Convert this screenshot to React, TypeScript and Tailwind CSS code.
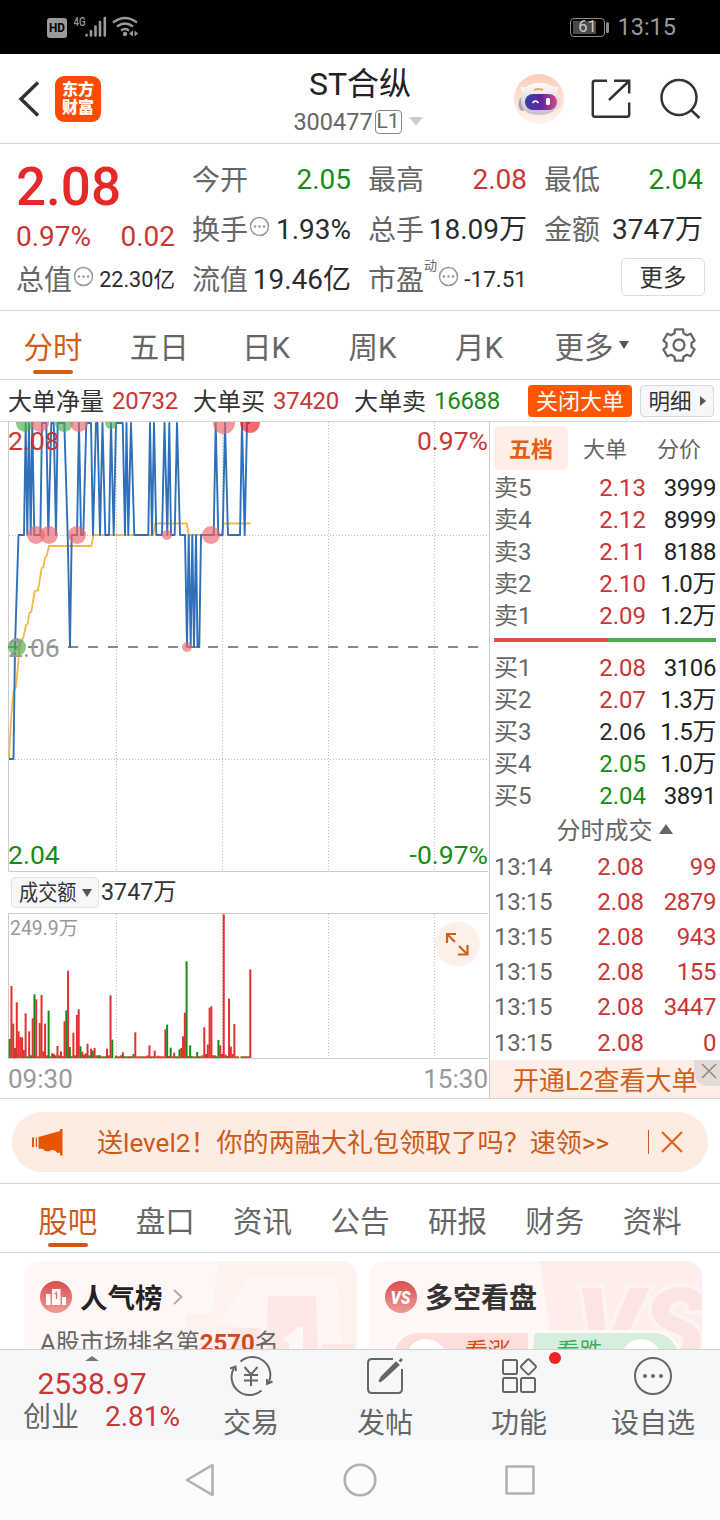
import React from "react";

const RED = "text-[#c93636]";
const GREEN = "text-[#168c16]";
const DARK = "text-[#2b2b2b]";

type Level = { label: string; price: string; volume: string; color: string };

const asks: Level[] = [
  { label: "卖5", price: "2.13", volume: "3999", color: RED },
  { label: "卖4", price: "2.12", volume: "8999", color: RED },
  { label: "卖3", price: "2.11", volume: "8188", color: RED },
  { label: "卖2", price: "2.10", volume: "1.0万", color: RED },
  { label: "卖1", price: "2.09", volume: "1.2万", color: RED },
];

const bids: Level[] = [
  { label: "买1", price: "2.08", volume: "3106", color: RED },
  { label: "买2", price: "2.07", volume: "1.3万", color: RED },
  { label: "买3", price: "2.06", volume: "1.5万", color: DARK },
  { label: "买4", price: "2.05", volume: "1.0万", color: GREEN },
  { label: "买5", price: "2.04", volume: "3891", color: GREEN },
];

const trades = [
  ["13:14", "2.08", "99"],
  ["13:15", "2.08", "2879"],
  ["13:15", "2.08", "943"],
  ["13:15", "2.08", "155"],
  ["13:15", "2.08", "3447"],
  ["13:15", "2.08", "0"],
];

// y of each price level inside the chart: T 2.08, M 2.07, L 2.06, B 2.05
const LEVEL_Y: Record<string, number> = { T: 1, M: 113, L: 225, B: 337 };

const priceLine =
  "9B 13.5B 15L 18.5M 24M 25.7T 27.3M 29T 30.7M 32.3T 34.3M 40.3M 42T 46.3T 48.3M 51.3T 53.7T 56M 57.7T 64.3T 67.7M 70L 71.7M 77M 79T 81M 83.3M 86.3T 91T 93M 96T 97.5T 100M 102.5T 105.3M 109M 111T 113.7M 116T 122.7T 125M 126.5T 128.3M 131T 134.3M 148.3M 150T 152M 154T 156.3M 162M 164.5T 167.3M 169.3T 171M 174.7M 177T 180M 185M 187L 188.7M 190.7L 192.3M 194L 196M 197.5L 199.3L 201M 213.7M 215.7T 218.3M 222.7M 225T 228M 240M 242T 244.7M 247T 250T";

const pricePoints = priceLine
  .split(" ")
  .map((p) => `${p.slice(0, -1)},${LEVEL_Y[p.slice(-1)]}`)
  .join(" ");

const averagePoints =
  "9,336 11,298 13.3,271 16,265 17.3,251 20,221 23.3,216 26,203 27.7,202 29.3,191 31.3,190 34.7,169 38,168.5 41.7,146 43.3,145.5 45.3,135 46.7,134 49,124 91.3,124 93.3,113 153.3,113 155,101.5 186.7,101.5 188.7,113 221.3,113 223.7,101.5 250.7,101.5";

const bubbles: [number, number, number, string][] = [
  [25, 1, 9, "#4caf50"],
  [40, 1, 9, "#ee6468"],
  [64, 1, 9, "#4caf50"],
  [79, 1, 9, "#ee6468"],
  [111, 1, 6, "#4caf50"],
  [36, 113, 9, "#ee6468"],
  [49, 113, 9, "#ee6468"],
  [77, 113, 9, "#ee6468"],
  [167, 113, 5, "#ee6468"],
  [211, 113, 9, "#ee6468"],
  [224, 1, 11, "#ee6468"],
  [250, 1, 10, "#f01820"],
  [187, 225, 5, "#ee6468"],
  [17, 225, 9, "#3fae3f"],
];

// one bar per minute from 09:30, g = down, r = up, number is height in thirds of a pixel
const volumes =
  "g57 r216 r103 r30 r167 r80 r63 r62 r24 r134 g5 r80 g8 r119 g191 r176 r5 r105 r189 r20 r103 r8 g142 g5 r14 r12 g8 r36 r8 r20 r6 r110 g143 r262 g33 g5 r76 r8 r129 r146 g35 r19 r10 r14 r43 g8 r28 g22 r30 r8 g8 g8 r5 g5 g5 r28 r8 r188 g55 g0 r7 g5 r5 r8 r17 g5 g5 r5 g5 r5 g12 r77 r5 r5 r5 g5 r5 r5 r8 r38 g5 r5 r22 r5 r7 r5 r5 r5 r86 g100 r6 g31 r5 r16 g5 r5 g26 r30 r65 r136 g290 r6 g38 g5 r5 r5 g18 g5 r5 r8 r92 r12 r40 r151 r155 r8 r8 g5 g54 r38 r12 r431 r10 g6 r178 r34 r12 r102 r5 r5 g0 r5 g5 r5 g5 r5 r266".split(
    " "
  );

const gearPath = (() => {
  const pts: string[] = [];
  for (let i = 0; i < 6; i++) {
    const base = -90 + i * 60;
    [
      [-21, 12.6],
      [-14, 16.2],
      [14, 16.2],
      [21, 12.6],
    ].forEach(([a, r]) => {
      const t = ((base + a) * Math.PI) / 180;
      pts.push(`${(18 + r * Math.cos(t)).toFixed(2)} ${(18 + r * Math.sin(t)).toFixed(2)}`);
    });
  }
  return `M${pts.join("L")}Z`;
})();

const InfoDot: React.FC = () => (
  <svg className="relative -top-[3px] ml-px h-[21px] w-[21px] shrink-0" viewBox="0 0 21 21">
    <circle cx="10.5" cy="10.5" r="9" fill="none" stroke="#999" strokeWidth="1.5" />
    <circle cx="6" cy="10.5" r="1.3" fill="#999" />
    <circle cx="10.5" cy="10.5" r="1.3" fill="#999" />
    <circle cx="15" cy="10.5" r="1.3" fill="#999" />
  </svg>
);

const Stat: React.FC<{ label: string; value: string; color?: string; info?: boolean; sup?: string; size?: string }> = ({
  label,
  value,
  color = DARK,
  info,
  sup,
  size = "",
}) => (
  <div className="flex h-[50px] items-center whitespace-nowrap text-[28px] leading-none">
    <span className="-ml-px mt-[3px] text-[#666]">{label}</span>
    {sup && <span className="relative -top-3.5 text-[13px] text-[#666]">{sup}</span>}
    {info && <InfoDot />}
    <span className={`ml-auto mt-px ${size} ${color}`}>{value}</span>
  </div>
);

const StatusBar: React.FC = () => (
  <div className="flex h-[54px] items-center justify-between bg-black pl-[46px] pr-11 text-[#9a9a9a]">
    <svg className="h-7 w-[94px]" viewBox="0 0 94 28">
      <rect x="1" y="5" width="20" height="20" rx="3" fill="#9a9a9a" />
      <text x="11" y="19" fontSize="12" fontWeight="700" textAnchor="middle" textLength="16" lengthAdjust="spacingAndGlyphs" fill="#000">HD</text>
      <text x="27.5" y="13" fontSize="13" fontWeight="500" textLength="12" lengthAdjust="spacingAndGlyphs" fill="#9a9a9a">4G</text>
      <g stroke="#9a9a9a" strokeWidth="2.6" strokeLinecap="round">
        <path d="M40.5 22V22.5M45 18V22.5M49.500 13.500V22.500M54 9V22.500M58.800 5V22.500" />
      </g>
      <g fill="none" stroke="#9a9a9a" strokeWidth="2.2">
        <path d="M67 9.500Q79 .5 91 9.500M71 13.500Q79 7.500 87 13.500M75 17.500Q79 14.500 83 17.500" />
      </g>
      <circle cx="79" cy="21" r="2.200" fill="#9a9a9a" />
      <path d="M87 17.500V23.500L83 20.500ZM88.500 17.500V23.500L92 20.500Z" fill="#9a9a9a" />
    </svg>
    <div className="flex items-center">
      <div className="flex h-[19px] w-[35px] items-center rounded-[4px] border border-[#8a8a8a] p-[2px]">
        <div className="flex h-full w-[23px] items-center justify-center bg-[#4a4a4a] pl-[5px] text-[16.5px] text-[#ccc]">61</div>
      </div>
      <div className="ml-px h-[11px] w-[3px] rounded bg-[#8a8a8a]" />
      <span className="ml-2 mt-0.5 text-[23.5px] leading-none">13:15</span>
    </div>
  </div>
);

const Robot: React.FC = () => (
  <svg className="h-[50px] w-[50px] shrink-0" viewBox="0 0 50 50">
    <defs>
      <linearGradient id="robotBg" x1="0" y1="0" x2="0" y2="1">
        <stop offset="0" stopColor="#fccdb8" />
        <stop offset="1" stopColor="#fff3ed" />
      </linearGradient>
      <linearGradient id="robotHead" x1="0" y1="0" x2="0" y2="1">
        <stop offset="0" stopColor="#fffdfa" />
        <stop offset="1" stopColor="#c5c0c8" />
      </linearGradient>
      <linearGradient id="visor" x1="0" y1="0" x2="1" y2="0">
        <stop offset="0" stopColor="#3540a0" />
        <stop offset=".5" stopColor="#6024a5" />
        <stop offset="1" stopColor="#d54a86" />
      </linearGradient>
    </defs>
    <circle cx="25" cy="25" r="25" fill="url(#robotBg)" />
    <path d="M6 13L14 13L10 22ZM45 13L36 13L40 22Z" fill="#fff4ef" />
    <ellipse cx="8.500" cy="30" rx="4" ry="7" fill="#aaa3ae" />
    <ellipse cx="43" cy="29" rx="4" ry="6" fill="#e6dce0" />
    <path d="M7 26C7 14 15 9 26 9S43 14 44 25C45 36 37 41 25 41S7 36 7 26Z" fill="url(#robotHead)" />
    <rect x="11" y="20" width="32" height="16" rx="8" fill="url(#visor)" />
    <path d="M18.500 29Q21.500 25 24.500 29" fill="none" stroke="#fff" strokeWidth="1.500" />
    <rect x="32" y="24" width="4" height="7" rx="1.500" fill="#fff" />
    <path d="M20 16Q25 14 29 16" fill="none" stroke="#e8a869" strokeWidth="2" />
  </svg>
);

const Header: React.FC = () => (
  <header className="grid h-[90px] grid-cols-[210px_1fr_210px] items-center border-b border-[#d5d5d5]">
    <div className="flex items-center pl-[17px]">
      <svg className="h-10 w-6" viewBox="0 0 24 40">
        <path d="M21 3.500L4 20L21 36.500" fill="none" stroke="#333" strokeWidth="3.500" />
      </svg>
      <div className="ml-3.5 flex h-[46px] w-[46px] flex-col items-center justify-center rounded-[9px] bg-[#ff4a00] text-[16px] font-black leading-[18px] text-white">
        <span>东方</span>
        <span>财富</span>
      </div>
    </div>
    <div className="flex flex-col items-center pt-1">
      <h1 className="text-[32px] leading-9 text-[#222]">ST合纵</h1>
      <div className="mr-1 mt-1.5 flex items-center text-[23.5px] leading-7 text-[#666]">
        300477
        <span className="ml-[2px] flex h-6 w-[27px] items-center justify-center rounded-[4px] border border-[#888] text-[21px] leading-none">L1</span>
        <span className="ml-[7px] border-x-[7px] border-t-[9px] border-x-transparent border-t-[#ccc]" />
      </div>
    </div>
    <div className="flex items-center justify-end pr-[19px]">
      <Robot />
      <svg className="ml-[26px] h-[42px] w-[42px] shrink-0" viewBox="0 0 42 42" fill="none" stroke="#333" strokeWidth="2.500">
        <path d="M17 2.800H5Q2.800 2.800 2.800 5V36.500Q2.800 38.700 5 38.700H37Q39.200 38.700 39.200 36.500V24.500M24 2.800H39.200V15.500M38.500 3.500L19 22" />
      </svg>
      <svg className="ml-[27px] h-[42px] w-[42px] shrink-0" viewBox="0 0 42 42" fill="none" stroke="#333" strokeWidth="2.500">
        <circle cx="20" cy="19.500" r="17.500" />
        <path d="M31.500 31.500L40.500 40" />
      </svg>
    </div>
  </header>
);

const Summary: React.FC = () => (
  <section className="grid h-[167px] grid-cols-4 gap-x-[18px] border-b border-[#d5d5d5] px-[17px] pt-[10px]">
    <div>
      <div className="-ml-px flex h-[65px] items-center pt-px text-[53px] font-medium leading-none text-[#e62828]">2.08</div>
      <div className={`-ml-px flex h-[35px] items-center justify-between text-[28px] leading-none ${RED}`}>
        <span>0.97%</span>
        <span>0.02</span>
      </div>
      <Stat label="总值" value="22.30亿" info size="text-[21.6px]" />
    </div>
    <div>
      <Stat label="今开" value="2.05" color={GREEN} />
      <Stat label="换手" value="1.93%" info />
      <Stat label="流值" value="19.46亿" />
    </div>
    <div>
      <Stat label="最高" value="2.08" color={RED} />
      <Stat label="总手" value="18.09万" />
      <Stat label="市盈" value="-17.51" sup="动" info size="text-[22.5px]" />
    </div>
    <div>
      <Stat label="最低" value="2.04" color={GREEN} />
      <Stat label="金额" value="3747万" />
      <button className="-mr-[2px] ml-auto mt-1 flex h-[38px] w-[84px] items-center justify-center rounded-[5px] border border-[#ddd] pt-[3px] text-[23.5px] leading-none text-[#333]">
        更多
      </button>
    </div>
  </section>
);

const PeriodTabs: React.FC = () => (
  <nav className="flex h-[69px] items-center border-b border-[#d5d5d5] text-[29.5px] leading-none text-[#666]">
    <div className="flex h-full w-[106px] flex-col items-center pt-[23px] text-[#d85a14]">
      分时
      <span className="mt-1.5 h-1 w-10 rounded-full bg-[#d85a14]" />
    </div>
    {["五日", "日K", "周K", "月K"].map((tab) => (
      <div key={tab} className="w-[106.6px] pt-[7px] text-center">{tab}</div>
    ))}
    <div className="ml-[22px] flex items-center">
      <span className="pt-[7px]">更多</span>
      <span className="ml-1.5 border-x-[5px] border-t-[8px] border-x-transparent border-t-[#555]" />
    </div>
    <svg className="ml-8 h-9 w-9" viewBox="0 0 36 36" fill="none" stroke="#666" strokeWidth="2.300" strokeLinejoin="round">
      <path d={gearPath} />
      <circle cx="18" cy="18" r="5.500" />
    </svg>
  </nav>
);

const BigOrders: React.FC = () => (
  <div className="flex h-[42px] items-center whitespace-nowrap border-b border-[#d5d5d5] pl-2 text-[24px] leading-none text-[#333]">
    <span className="pt-0.5">大单净量</span>
    <span className={`ml-2 mt-px w-[66px] tracking-[-0.3px] ${RED}`}>20732</span>
    <span className="ml-[15px] pt-0.5">大单买</span>
    <span className={`ml-2 mt-px w-[66px] tracking-[-0.3px] ${RED}`}>37420</span>
    <span className="ml-[15px] pt-0.5">大单卖</span>
    <span className={`ml-2 mt-px w-[66px] tracking-[-0.3px] ${GREEN}`}>16688</span>
    <button className="ml-[28px] h-8 w-[104px] rounded-[4px] bg-[#ff5700] pt-0.5 text-[22px] leading-none text-white">关闭大单</button>
    <button className="ml-2 flex h-8 w-[74px] items-center justify-center rounded-[4px] border border-[#d5d8dc] bg-[#f6f7f9] text-[21.5px] leading-none">
      <span className="pt-[3px]">明细</span>
      <span className="ml-2 border-y-[5px] border-l-[6px] border-y-transparent border-l-[#555]" />
    </button>
  </div>
);

const PriceChart: React.FC = () => (
  <svg className="block h-[450px] w-[489px]" viewBox="0 0 489 450" fontSize="26.500">
    <g stroke="#bbb" strokeWidth="1" strokeDasharray="1 2">
      <path d="M116.500 0V449M222.500 0V449M328.500 0V449M434.500 0V449M9 113.500H488M9 337.500H488" />
    </g>
    <path d="M8.500 0V449.500H488" fill="none" stroke="#ccc" />
    <path d="M8 225H488" stroke="#888" strokeWidth="1.800" strokeDasharray="10 10" />
    <polyline points={averagePoints} fill="none" stroke="#f0b94a" strokeWidth="1.800" />
    <polyline points={pricePoints} fill="none" stroke="#2f70b8" strokeWidth="1.900" strokeLinejoin="round" />
    {bubbles.map(([x, y, r, fill], i) => (
      <circle key={i} cx={x} cy={y} r={r} fill={fill} fillOpacity="0.65" />
    ))}
    <text x="8" y="28" fill="#c93636">2.08</text>
    <text x="488" y="28" textAnchor="end" fill="#c93636">0.97%</text>
    <text x="8" y="235" fill="#999">2.06</text>
    <text x="8" y="442" fill="#168c16">2.04</text>
    <text x="488" y="442" textAnchor="end" fill="#168c16">-0.97%</text>
  </svg>
);

const VolumeChart: React.FC = () => (
  <svg className="block h-[146px] w-[489px]" viewBox="0 0 489 146">
    <path d="M116.500 1V145M222.500 1V145M328.500 1V145M434.500 1V145" stroke="#bbb" strokeDasharray="1 2" />
    <path d="M488 .5H8.500V145.500H488" fill="none" stroke="#ccc" />
    {volumes.map((v, i) => {
      const h = Number(v.slice(1)) / 3;
      return (
        <rect key={i} x={8.7 + i * 1.769} y={145 - h} width="2" height={h} fill={v[0] === "g" ? "#168c16" : "#e03030"} />
      );
    })}
    <text x="10" y="22" fontSize="19.400" fill="#999">249.9万</text>
    <circle cx="457.500" cy="31" r="22.500" fill="#fdf0e9" />
    <path d="M447 30V21H456M447 21L455 29M459 33L467 41M458 41.500H467.500V32" fill="none" stroke="#d0601c" strokeWidth="2.200" />
  </svg>
);

const LevelRow: React.FC<Level> = ({ label, price, volume, color }) => (
  <div className="flex h-8 items-center">
    <span className="w-[60px] text-[#666]">{label}</span>
    <span className={`w-[92px] text-right ${color}`}>{price}</span>
    <span className="flex-1 text-right tracking-[-0.4px] text-[#222]">{volume}</span>
  </div>
);

const OrderBook: React.FC = () => (
  <div className="flex w-[231px] flex-col border-l border-[#ccc] text-[24px] leading-none">
    <div className="flex pl-1 pt-1 text-[22px] text-[#666]">
      <div className="flex h-11 w-[74px] items-center justify-center rounded-md bg-[#feeee6] pt-1 font-bold text-[#e85d12]">五档</div>
      <div className="flex h-11 w-[74px] items-center justify-center pt-1">大单</div>
      <div className="flex h-11 w-[74px] items-center justify-center pt-1">分价</div>
    </div>
    <div className="pl-1 pr-1 pt-[2px]">
      {asks.map((row) => (
        <LevelRow key={row.label} {...row} />
      ))}
      <div className="my-1.5 flex h-1">
        <div className="w-[114px] bg-[#e04c4c]" />
        <div className="flex-1 bg-[#4caf50]" />
      </div>
      <div className="pt-1">
        {bids.map((row) => (
          <LevelRow key={row.label} {...row} />
        ))}
      </div>
      <div className="flex h-[37px] items-center justify-center gap-1.5 pl-[22px] pr-[3px] text-[#666]">
        分时成交
        <span className="-mt-1 border-x-[7px] border-b-[10px] border-x-transparent border-b-[#666]" />
      </div>
      {trades.map(([time, price, volume], i) => (
        <div key={i} className="flex h-[35.2px] items-center">
          <span className="w-[60px] tracking-[-0.3px] text-[#666]">{time}</span>
          <span className={`w-[90px] text-right ${RED}`}>{price}</span>
          <span className={`flex-1 text-right tracking-[-0.4px] ${RED}`}>{volume}</span>
        </div>
      ))}
    </div>
    <div className="relative mt-auto flex h-[39px] items-center bg-[#fdefe8] pl-[23px] pt-1 text-[26px] text-[#d0601c]">
      开通L2查看大单
      <div className="absolute right-0 top-0 flex h-[26px] w-[26px] items-center justify-center rounded-bl-[14px] bg-[#666]/15">
        <svg className="-mt-1 ml-1 h-4 w-4" viewBox="0 0 16 16" stroke="#888" strokeWidth="1.500">
          <path d="M1 1L15 15M15 1L1 15" />
        </svg>
      </div>
    </div>
  </div>
);

const Banner: React.FC = () => (
  <div className="h-[85px] border-b border-[#d5d5d5] px-3 pt-[13px]">
    <div className="flex h-[60px] items-center whitespace-nowrap rounded-full bg-[#fdece2] pl-5 pr-[25px] text-[26px] leading-none text-[#cc5a1c]">
      <svg className="h-7 w-8" viewBox="0 0 32 28" fill="#e85500">
        <path d="M0 9.500H2V19H0ZM3.800 9.500H5V19H3.800ZM6.500 9L28 3V1H30.500V27.500H28V24.500L25.500 25L23 22.500L19 22L17 23.500L13 23L11 21L6.500 20.500Z" />
      </svg>
      <span className="ml-[33px] pt-[3px] text-[26.1px]">送level2！你的两融大礼包领取了吗？速领&gt;&gt;</span>
      <span className="ml-auto h-6 w-px bg-[#cc5a1c]" />
      <svg className="ml-3 h-[22px] w-[22px]" viewBox="0 0 22 22" stroke="#dc6425" strokeWidth="2.200">
        <path d="M1 1L21 21M21 1L1 21" />
      </svg>
    </div>
  </div>
);

const SectionTabs: React.FC = () => (
  <nav className="flex h-[69px] border-b border-[#d5d5d5] px-[19px] pt-6 text-[29.5px] leading-none text-[#666]">
    {["股吧", "盘口", "资讯", "公告", "研报", "财务", "资料"].map((tab, i) => (
      <div key={tab} className={`flex flex-1 flex-col items-center ${i === 0 ? "text-[#cc5a1c]" : ""}`}>
        {tab}
        {i === 0 && <span className="mt-[5px] h-1 w-10 rounded-full bg-[#cc5a1c]" />}
      </div>
    ))}
  </nav>
);

const Cards: React.FC = () => (
  <div className="flex h-24 gap-3 overflow-hidden pl-6 pt-2">
    {/* Popularity rank */}
    <div className="relative h-[140px] w-[333px] shrink-0 overflow-hidden rounded-2xl bg-[#fff7f5] pl-4 pt-5">
      <svg className="absolute left-0 top-0 h-[140px] w-[333px]" viewBox="0 0 333 140">
        <path d="M194 0H333V140H162V53H188Z" fill="#fdecea" fillOpacity=".6" />
        <path d="M225 16H313L323 140H218V66L194 62Z" fill="#fff7f5" fillOpacity=".7" />
        <path d="M244 35H292L296 140H240ZM208 67H236V140H208ZM298 83H330V140H298Z" fill="#fbdfdc" fillOpacity=".6" />
        <path d="M258 79L275 66H279V100H265V82Z" fill="#fff7f5" />
      </svg>
      <div className="relative flex h-8 items-center">
        <svg className="h-8 w-8" viewBox="0 0 32 32">
          <defs>
            <linearGradient id="badge" x1="0" y1="0" x2="0" y2="1">
              <stop offset="0" stopColor="#d94e4a" />
              <stop offset="1" stopColor="#ee9b98" />
            </linearGradient>
          </defs>
          <circle cx="16" cy="16" r="16" fill="url(#badge)" />
          <path d="M6 13H10.500V24H6ZM12 8H20.500V24H12ZM22 16H26V24H22Z" fill="#fff" />
          <path d="M14.500 13L16.500 11.500V18" fill="none" stroke="#df6965" strokeWidth="1.300" />
        </svg>
        <span className="ml-2 mt-[3px] text-[27.5px] font-bold leading-none text-[#222]">人气榜</span>
        <svg className="ml-2.5 h-4 w-[10px]" viewBox="0 0 10 16" fill="none" stroke="#aaa" strokeWidth="1.800">
          <path d="M1 1L8.500 8L1 15" />
        </svg>
      </div>
      <div className="relative mt-[18px] whitespace-nowrap text-[24px] leading-6 text-[#666]">
        A股市场排名第<b className="text-[#cf4a20]">2570</b>名
      </div>
    </div>
    {/* Long / short vote */}
    <div className="relative h-[140px] w-[333px] shrink-0 overflow-hidden rounded-2xl bg-[#fff7f5] pl-4 pt-5">
      <svg className="absolute left-0 top-0 h-[140px] w-[333px]" viewBox="0 0 333 140">
        <path d="M171 0H333V140H190Z" fill="#fdeeec" />
        <text x="206" y="102" fontSize="105" fontWeight="900" fontStyle="italic" fill="#fbe4e2" stroke="#fdf3f1" strokeWidth="8" paintOrder="stroke">VS</text>
      </svg>
      <div className="relative flex h-8 items-center">
        <svg className="h-8 w-8" viewBox="0 0 32 32">
          <circle cx="16" cy="16" r="16" fill="url(#badge)" />
          <text x="15.500" y="22.500" fontSize="18" fontWeight="900" fontStyle="italic" textAnchor="middle" textLength="20" lengthAdjust="spacingAndGlyphs" fill="#fff">VS</text>
        </svg>
        <span className="ml-2 mt-[3px] text-[28px] font-bold leading-none text-[#333]">多空看盘</span>
      </div>
      <div className="relative ml-[6px] mt-[17px] flex h-[54px] w-[290px] overflow-hidden rounded-full border-[3px] border-[#fffaf8] text-[23px] leading-none">
        <div className="flex flex-1 bg-[#fcdedb] pl-3 pt-1.5 text-[#d84a20]">
          <span className="h-10 w-10 rounded-full bg-white" />
          <span className="ml-[19px] mt-px">看涨</span>
        </div>
        <div className="w-1 skew-x-[-6deg] bg-[#fffaf8]" />
        <div className="flex flex-1 bg-[#d6efdc] pl-[25px] pt-1.5 text-[#3fae60]">
          <span className="mt-px">看跌</span>
          <span className="ml-[18px] h-10 w-10 rounded-full bg-white" />
        </div>
      </div>
    </div>
  </div>
);

const ActionBar: React.FC = () => (
  <div className="flex h-[91px] border-t border-[#d0d3d6] bg-[#f6f7f9] text-[28px] leading-none text-[#666]">
    <div className="flex w-[184px] flex-col items-center">
      <span className="mt-1.5 border-x-[7px] border-b-[5px] border-x-transparent border-b-[#777]" />
      <span className={`mt-2 text-[30px] ${RED}`}>2538.97</span>
      <div className="mt-1 flex w-full justify-between pl-[23px] pr-1">
        <span className="pt-px">创业</span>
        <span className={RED}>2.81%</span>
      </div>
    </div>
    <div className="flex w-[134px] flex-col items-center pt-1.5">
      <svg className="h-10 w-11" viewBox="0 0 44 40" fill="none" stroke="#666" strokeWidth="2">
        <path d="M11.500 5.500A18 18 0 0 1 39.500 27M32.500 34.500A18 18 0 0 1 5 12" />
        <path d="M1 12.500L6.500 10.500L7 15M43.500 25.500L38 28V23" />
        <path d="M15.500 11L22 18.500L28.500 11M22 18.500V30M15 19H29M15 24.500H29" />
      </svg>
      <span className="mt-3.5">交易</span>
    </div>
    <div className="flex w-[134px] flex-col items-center pt-1.5">
      <svg className="h-10 w-10" viewBox="0 0 40 40" fill="none" stroke="#666" strokeWidth="2">
        <path d="M28 3H7Q3 3 3 7V33Q3 37 7 37H33Q37 37 37 33V13" />
        <path d="M31 7L33 9L19 22L14.500 25.500L17 21ZM34.500 5.500L37 3" strokeWidth="2.500" fill="#666" />
      </svg>
      <span className="mt-3.5">发帖</span>
    </div>
    <div className="relative flex w-[134px] flex-col items-center pt-1.5">
      <svg className="h-10 w-10" viewBox="0 0 40 40" fill="none" stroke="#666" strokeWidth="2">
        <rect x="4" y="4" width="14" height="14" rx="1.500" />
        <rect x="4" y="22" width="14" height="14" rx="1.500" />
        <rect x="22" y="22" width="14" height="14" rx="1.500" />
        <rect x="23.500" y="5" width="11.500" height="11.500" rx="1.500" transform="rotate(45 29.250 11)" />
      </svg>
      <span className="mt-3.5">功能</span>
      <span className="absolute left-[97px] top-[2px] h-3 w-3 rounded-full bg-[#ee2222]" />
    </div>
    <div className="flex w-[134px] flex-col items-center pt-1.5">
      <svg className="h-10 w-10" viewBox="0 0 40 40">
        <circle cx="20" cy="20" r="18" fill="none" stroke="#666" strokeWidth="2" />
        <circle cx="12" cy="20" r="2" fill="#666" />
        <circle cx="20" cy="20" r="2" fill="#666" />
        <circle cx="28" cy="20" r="2" fill="#666" />
      </svg>
      <span className="mt-3.5">设自选</span>
    </div>
  </div>
);

const SystemNav: React.FC = () => (
  <div className="flex h-20 items-center justify-center bg-[#fcfcfc]">
    <svg className="h-10 w-[360px]" viewBox="0 0 360 40" fill="none" stroke="#b0b0b0" strokeWidth="2.600" strokeLinejoin="round">
      <path d="M32.500 5V35L7 20Z" />
      <circle cx="180" cy="20" r="15.300" />
      <rect x="326.500" y="6.500" width="27" height="27" />
    </svg>
  </div>
);

const App: React.FC = () => {
  return (
    <div className="h-[1520px] w-[720px] overflow-hidden bg-white font-['Roboto','Noto_Sans_CJK_SC',sans-serif]">
      <StatusBar />
      <Header />
      <Summary />
      <PeriodTabs />
      <BigOrders />
      <div className="flex h-[677px] border-b border-[#d5d5d5]">
        <div className="w-[489px]">
          <PriceChart />
          <div className="flex h-[41px] items-center pl-[11px]">
            <div className="flex h-[31px] w-[88px] items-center rounded-[4px] border border-[#e2e4e8] bg-[#f6f7f9] pl-[7px] text-[#333]">
              <span className="w-[57px] origin-left scale-x-[0.87] whitespace-nowrap text-[22px] leading-none">成交额</span>
              <span className="ml-1.5 border-x-[5px] border-t-[8px] border-x-transparent border-t-[#555]" />
            </div>
            <span className="ml-0.5 text-[23.3px] leading-none text-[#333]">3747万</span>
          </div>
          <VolumeChart />
          <div className="flex h-10 items-center justify-between pl-2 pr-px text-[26px] leading-none text-[#999]">
            <span>09:30</span>
            <span>15:30</span>
          </div>
        </div>
        <OrderBook />
      </div>
      <Banner />
      <SectionTabs />
      <Cards />
      <ActionBar />
      <SystemNav />
    </div>
  );
};

export default App;
